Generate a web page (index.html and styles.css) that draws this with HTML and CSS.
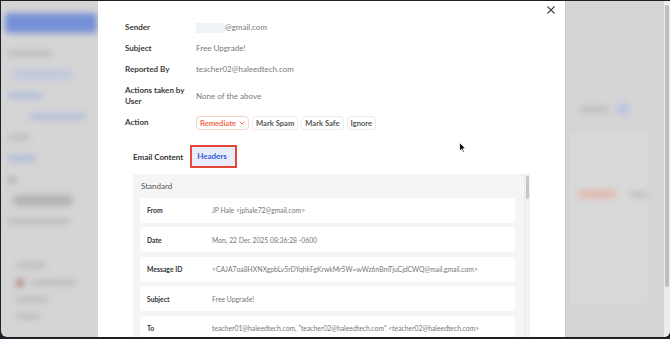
FILE: index.html
```html
<!DOCTYPE html>
<html>
<head>
    <title>Reported Email</title>
    <link rel="stylesheet" href="styles.css">
</head>
<body>
    <div class="window">
        <aside class="side">
            <div class="blur logo"></div>
            <div class="slot"><span class="blur line grey" style="width: 44px"></span></div>
            <div class="slot"><span class="blur pill blue-pill"></span></div>
            <div class="slot"><span class="blur line blue" style="width: 34px"></span></div>
            <div class="slot"><span class="blur line blue indent" style="width: 55px"></span></div>
            <div class="slot"><span class="blur line grey" style="width: 22px"></span></div>
            <div class="slot"><span class="blur line blue" style="width: 28px"></span></div>
            <div class="slot"><span class="blur line dark" style="width: 8px"></span></div>
            <div class="slot"><span class="blur pill dark-pill"></span></div>
            <div class="slot"><span class="blur line grey" style="width: 62px"></span></div>
            <div class="slot small spaced"><span class="blur line grey indent-s" style="width: 30px"></span></div>
            <div class="slot small">
                <span class="blur dot"></span>
                <span class="blur line grey" style="width: 45px"></span>
            </div>
            <div class="slot small"><span class="blur line grey indent-s" style="width: 33px"></span></div>
            <div class="slot small"><span class="blur line grey indent-s" style="width: 25px"></span></div>
        </aside>

        <div class="modal">
            <div class="modal-top">
                <button class="close" title="Close">
                    <svg width="8" height="8" viewBox="0 0 8 8">
                        <path d="M0.5 0.5 L7.5 7.5 M7.5 0.5 L0.5 7.5" stroke="#444" stroke-width="1.1" fill="none"/>
                    </svg>
                </button>
            </div>

            <div class="details">
                <div class="row">
                    <div class="label">Sender</div>
                    <div class="value"><span class="mask"></span>@gmail.com</div>
                </div>
                <div class="row">
                    <div class="label">Subject</div>
                    <div class="value">Free Upgrade!</div>
                </div>
                <div class="row">
                    <div class="label">Reported By</div>
                    <div class="value">teacher02@haleedtech.com</div>
                </div>
                <div class="row">
                    <div class="label">Actions taken by User</div>
                    <div class="value">None of the above</div>
                </div>
                <div class="row">
                    <div class="label">Action</div>
                    <div class="actions">
                        <button class="act remediate">Remediate
                            <svg width="6" height="4" viewBox="0 0 6 4">
                                <path d="M0.7 0.7 L3 3 L5.3 0.7" stroke="#f0694a" stroke-width="1" fill="none"/>
                            </svg>
                        </button>
                        <button class="act">Mark Spam</button>
                        <button class="act">Mark Safe</button>
                        <button class="act">Ignore</button>
                    </div>
                </div>
            </div>

            <div class="tabs">
                <div class="tab">Email Content</div>
                <div class="tab active">Headers</div>
            </div>

            <div class="panel">
                <div class="panel-body">
                    <div class="panel-title">Standard</div>
                    <div class="hrow">
                        <div class="hlabel">From</div>
                        <div class="hvalue">JP Hale &lt;jphale72@gmail.com&gt;</div>
                    </div>
                    <div class="hrow">
                        <div class="hlabel">Date</div>
                        <div class="hvalue">Mon, 22 Dec 2025 08:36:28 -0600</div>
                    </div>
                    <div class="hrow">
                        <div class="hlabel">Message ID</div>
                        <div class="hvalue">&lt;CAJA7oa8HXNXgpbLv5rDYqhkFgKrwkMr5W=wWz6nBmTjuCjdCWQ@mail.gmail.com&gt;</div>
                    </div>
                    <div class="hrow">
                        <div class="hlabel">Subject</div>
                        <div class="hvalue">Free Upgrade!</div>
                    </div>
                    <div class="hrow">
                        <div class="hlabel">To</div>
                        <div class="hvalue">teacher01@haleedtech.com, "teacher02@haleedtech.com" &lt;teacher02@haleedtech.com&gt;</div>
                    </div>
                </div>
                <div class="panel-bar"><div class="thumb"></div></div>
            </div>

            <svg class="cursor" width="7" height="11" viewBox="0 0 7 11">
                <path d="M0.5 0.5 L0.5 9 L2.6 7.2 L4 10.3 L5.3 9.7 L3.9 6.7 L6.5 6.5 Z" fill="#111" stroke="#fff" stroke-width="0.8"/>
            </svg>
        </div>

        <div class="rest">
            <div class="rest-head">
                <span class="blur line grey" style="width: 28px"></span>
                <span class="blur dot blue-dot"></span>
            </div>
            <div class="rest-card">
                <div class="rest-buttons">
                    <span class="blur pill orange-pill"></span>
                    <span class="blur line grey" style="width: 18px"></span>
                </div>
            </div>
        </div>

        <div class="pagebar"><div class="page-thumb"></div></div>
    </div>
</body>
</html>
```

FILE: styles.css
```css
* {
    margin: 0;
    padding: 0;
    box-sizing: border-box;
}
body {
    font-family: 'Lato', sans-serif;
    background: #1d2127;
    width: 670px;
    height: 339px;
    overflow: hidden;
    padding: 1px 0 0 1px;
}
.window {
    display: flex;
    width: 669px;
    height: 336px;
    background: #d5d5d5;
    border-radius: 0 0 6px 6px;
    overflow: hidden;
    position: relative;
}

/* blurred page behind the modal */
.side {
    width: 97px;
    flex-shrink: 0;
    padding: 12px 0 0 4px;
    display: flex;
    flex-direction: column;
}
.blur {
    display: block;
    filter: blur(3px);
    border-radius: 3px;
}
.logo {
    width: 92px;
    height: 20px;
    background: #7590d6;
    filter: blur(3px);
    margin-bottom: 10px;
}
.slot {
    height: 21px;
    display: flex;
    align-items: center;
    gap: 7px;
    padding-left: 3px;
}
.slot.small {
    height: 17px;
    padding-left: 11px;
}
.slot.spaced {
    margin-top: 25px;
}
.line {
    height: 5px;
}
.grey { background: #b9b9b9; }
.blue { background: #a9b7dd; }
.dark { background: #a8a8a8; height: 6px; }
.indent { margin-left: 22px; }
.pill {
    height: 11px;
    border-radius: 6px;
}
.blue-pill {
    width: 62px;
    margin-left: 3px;
    background: #c3c9dd;
}
.dark-pill {
    width: 60px;
    margin-left: 5px;
    background: #b3b3b3;
}
.dot {
    width: 8px;
    height: 8px;
    border-radius: 50%;
    background: #b07f82;
}

.modal {
    width: 467px;
    flex-shrink: 0;
    background: white;
    padding: 0 0 0 27px;
    position: relative;
    box-shadow: 1px 0 0 #c8c8c8;
}
.modal-top {
    display: flex;
    justify-content: flex-end;
    height: 21px;
    padding: 4px 9px 0 0;
}
.close {
    background: none;
    border: none;
    width: 10px;
    height: 10px;
    display: flex;
    align-items: center;
    justify-content: center;
}

.details {
    display: flex;
    flex-direction: column;
    gap: 10px;
}
.row {
    display: flex;
    font-size: 8px;
    line-height: 11px;
}
.label {
    width: 71px;
    padding-right: 6px;
    color: #3a3a3a;
    font-weight: 700;
}
.value {
    color: #7a7a7a;
    display: flex;
    align-items: center;
}
.mask {
    display: inline-block;
    width: 29px;
    height: 10px;
    background: #eef3f8;
}
.actions {
    display: flex;
    gap: 3px;
    margin-top: -1px;
}
.act {
    font-family: 'Lato', sans-serif;
    font-size: 7.6px;
    font-weight: 700;
    color: #555;
    background: white;
    border: 1px solid #ececec;
    border-radius: 4px;
    height: 14px;
    padding: 0 3px;
    display: flex;
    align-items: center;
    gap: 3px;
}
.remediate {
    color: #f0694a;
    border-color: #f8cfc4;
}

.tabs {
    display: flex;
    align-items: center;
    margin: 15px 0 0 1px;
    font-size: 8px;
    font-weight: 700;
}
.tab {
    padding: 0 7px;
    color: #333;
}
.tab.active {
    color: #2f5bd6;
    background: #e9edfb;
    border: 2px solid #e5483a;
    height: 23px;
    line-height: 19px;
    padding: 0 8px 0 5px;
}

.panel {
    display: flex;
    width: 397px;
    margin: 6px 0 0 8px;
    height: 170px;
    background: #f5f5f5;
}
.panel-body {
    flex: 1;
    padding: 7px 9px 0 7px;
    display: flex;
    flex-direction: column;
    gap: 4.5px;
}
.panel-title {
    font-size: 8px;
    line-height: 11px;
    color: #555;
    padding-left: 1px;
    margin-bottom: 1px;
}
.hrow {
    display: flex;
    align-items: center;
    flex-shrink: 0;
    height: 25px;
    background: white;
    border-radius: 2px;
    padding-left: 7px;
    font-size: 6.8px;
}
.hlabel {
    width: 65px;
    color: #333;
    font-weight: 700;
}
.hvalue {
    color: #777;
    white-space: nowrap;
}
.panel-bar {
    width: 6px;
    padding: 2px 1px 0 1px;
    background: #f1f1f1;
    border-left: 1px solid #ebebeb;
}
.thumb {
    height: 23px;
    background: #c6c6c6;
    border-radius: 2px;
}

.cursor {
    position: absolute;
    left: 361px;
    top: 141px;
}

.rest {
    flex: 1;
    min-width: 0;
    padding: 102px 0 0 15px;
}
.rest-head {
    display: flex;
    align-items: center;
    gap: 9px;
}
.blue-dot {
    width: 12px;
    height: 12px;
    background: #b8c3e6;
}
.rest-card {
    margin-top: 18px;
    margin-left: -10px;
    width: 77px;
    height: 170px;
    background: #d9d9d9;
    border-radius: 3px;
    padding: 57px 0 0 8px;
}
.rest-buttons {
    display: flex;
    align-items: center;
    gap: 14px;
}
.orange-pill {
    width: 40px;
    height: 8px;
    background: #e1b8ad;
}

.pagebar {
    width: 6px;
    flex-shrink: 0;
    background: #ececec;
    padding: 4px 1px 0 1px;
}
.page-thumb {
    height: 282px;
    background: #bfbfbf;
    border-radius: 3px;
}
```
